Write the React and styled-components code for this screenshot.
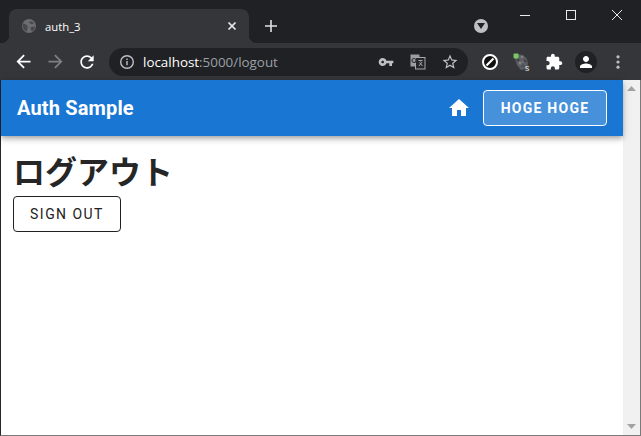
import React from "react";
import styled, { createGlobalStyle } from "styled-components";

const GlobalStyle = createGlobalStyle`
  html, body {
    margin: 0;
    padding: 0;
    overflow: hidden;
    background: #202124;
  }
`;

const Window = styled.div`
  width: 641px;
  height: 436px;
  box-sizing: border-box;
  display: flex;
  flex-direction: column;
  font-family: "Open Sans", "Liberation Sans", sans-serif;
  background: #202124;
`;

const TitleBar = styled.div`
  height: 43px;
  flex: none;
  display: flex;
  align-items: flex-start;
  padding: 0 1px 0 9px;
`;

const Tab = styled.div`
  position: relative;
  width: 240px;
  height: 34px;
  margin-top: 9px;
  box-sizing: border-box;
  padding: 0 9px 0 13px;
  display: flex;
  align-items: center;
  background: #35363a;
  border-radius: 8px 8px 0 0;

  &::before,
  &::after {
    content: "";
    position: absolute;
    bottom: 0;
    width: 8px;
    height: 8px;
  }
  &::before {
    left: -8px;
    background: radial-gradient(circle at 0 0, transparent 8px, #35363a 8.5px);
  }
  &::after {
    right: -8px;
    background: radial-gradient(circle at 100% 0, transparent 8px, #35363a 8.5px);
  }
`;

const TabTitle = styled.span`
  flex: 1;
  margin-left: 9px;
  font-size: 11.3px;
  color: #fff;
`;

const NewTab = styled.div`
  width: 28px;
  height: 28px;
  margin: 12px 0 0 8px;
  display: flex;
  align-items: center;
  justify-content: center;
`;

const TitleSpacer = styled.div`
  flex: 1;
`;

const TabSearch = styled.div`
  width: 14px;
  height: 14px;
  margin: 19px 14px 0 0;
  border-radius: 50%;
  background: #bdc1c6;
  display: flex;
  align-items: center;
  justify-content: center;
`;

const WindowControl = styled.div`
  width: 46px;
  height: 30px;
  display: flex;
  align-items: center;
  justify-content: center;
`;

const Toolbar = styled.div`
  height: 37px;
  flex: none;
  display: flex;
  align-items: center;
  padding: 0 7px;
  background: #35363a;
`;

const ToolButton = styled.div`
  width: 32px;
  height: 32px;
  flex: none;
  display: flex;
  align-items: center;
  justify-content: center;
`;

const Omnibox = styled.div`
  flex: 1;
  height: 28px;
  margin: 0 6px;
  padding: 0 2px 0 10px;
  box-sizing: border-box;
  display: flex;
  align-items: center;
  background: #202124;
  border-radius: 14px;
`;

const UrlText = styled.div`
  flex: 1;
  margin-left: 8px;
  font-size: 13.4px;
  color: #9aa0a6;
  white-space: nowrap;
`;

const UrlHost = styled.span`
  color: #fff;
`;

const OmniIcon = styled.div`
  width: 32px;
  height: 28px;
  flex: none;
  display: flex;
  align-items: center;
  justify-content: center;
`;

const Avatar = styled.div`
  width: 22px;
  height: 22px;
  border-radius: 50%;
  background: #202124;
  display: flex;
  align-items: center;
  justify-content: center;
`;

const Viewport = styled.div`
  flex: 1;
  min-height: 0;
  display: flex;
  border-left: 1px solid #26272a;
  border-right: 1px solid #7a7a7a;
  border-bottom: 1px solid #7a7a7a;
  background: #fff;
`;

const Page = styled.div`
  flex: 1;
  min-width: 0;
  display: flex;
  flex-direction: column;
  font-family: Roboto, "Noto Sans CJK JP", sans-serif;
`;

const AppBar = styled.header`
  position: relative;
  height: 56px;
  flex: none;
  display: flex;
  align-items: center;
  padding: 0 16px;
  background: #1976d2;
  color: #fff;
  box-shadow: 0 2px 4px -1px rgba(0, 0, 0, 0.2), 0 4px 5px 0 rgba(0, 0, 0, 0.14),
    0 1px 10px 0 rgba(0, 0, 0, 0.12);
`;

const AppTitle = styled.div`
  flex: 1;
  font-size: 20px;
  font-weight: 700;
  letter-spacing: 0.15px;
`;

const HomeButton = styled.div`
  width: 24px;
  height: 24px;
  margin-right: 12px;
`;

const AccountButton = styled.div`
  width: 124px;
  height: 36px;
  box-sizing: border-box;
  display: flex;
  align-items: center;
  justify-content: center;
  border: 1px solid #fff;
  border-radius: 4px;
  background: rgba(255, 255, 255, 0.2);
  font-size: 14px;
  font-weight: 700;
  letter-spacing: 1.25px;
`;

const Content = styled.main`
  padding: 10px 12px;
`;

const Heading = styled.h1`
  margin: 0 0 2px;
  font-family: "Noto Sans CJK JP", sans-serif;
  font-size: 32px;
  font-weight: 700;
  line-height: 48px;
  color: #262626;
`;

const SignOutButton = styled.button`
  width: 108px;
  height: 36px;
  display: block;
  padding: 0;
  background: #fff;
  border: 1px solid #212121;
  border-radius: 4px;
  font-family: Roboto, sans-serif;
  font-size: 14px;
  font-weight: 400;
  letter-spacing: 1.45px;
  color: #212121;
`;

const Scrollbar = styled.div`
  width: 17px;
  flex: none;
  display: flex;
  flex-direction: column;
  justify-content: space-between;
  align-items: center;
  background: #f1f1f1;
`;

const ScrollArrow = styled.div`
  height: 17px;
  display: flex;
  align-items: center;
  justify-content: center;
`;

const Icon = ({ d, size = 24, fill = "#fff" }) => (
  <svg width={size} height={size} viewBox="0 0 24 24" fill={fill}>
    <path d={d} />
  </svg>
);

const paths = {
  back: "M20 11H7.83l5.59-5.59L12 4l-8 8 8 8 1.41-1.41L7.83 13H20v-2z",
  forward: "M4 11h12.17l-5.59-5.59L12 4l8 8-8 8-1.41-1.41L16.17 13H4v-2z",
  reload:
    "M17.65 6.35C16.2 4.9 14.21 4 12 4c-4.42 0-7.99 3.58-7.99 8s3.57 8 7.99 8c3.73 0 6.84-2.55 7.73-6h-2.08c-.82 2.33-3.04 4-5.65 4-3.31 0-6-2.69-6-6s2.69-6 6-6c1.66 0 3.14.69 4.22 1.78L13 11h7V4l-2.35 2.35z",
  key: "M12.65 10C11.83 7.67 9.61 6 7 6c-3.31 0-6 2.69-6 6s2.69 6 6 6c2.61 0 4.83-1.67 5.65-4H17v4h4v-4h2v-4H12.65zM7 14c-1.1 0-2-.9-2-2s.9-2 2-2 2 .9 2 2-.9 2-2 2z",
  star: "M22 9.24l-7.19-.62L12 2 9.19 8.63 2 9.24l5.46 4.73L5.82 21 12 17.27 18.18 21l-1.63-7.03L22 9.24zM12 15.4l-3.76 2.27 1-4.28-3.32-2.88 4.38-.38L12 6.1l1.71 4.04 4.38.38-3.32 2.88 1 4.28L12 15.4z",
  puzzle:
    "M20.5 11H19V7c0-1.1-.9-2-2-2h-4V3.5C13 2.12 11.88 1 10.5 1S8 2.12 8 3.5V5H4c-1.1 0-1.99.9-1.99 2v3.8H3.5c1.49 0 2.7 1.21 2.7 2.7s-1.21 2.7-2.7 2.7H2V20c0 1.1.9 2 2 2h3.8v-1.5c0-1.49 1.21-2.7 2.7-2.7 1.49 0 2.7 1.21 2.7 2.7V22H17c1.1 0 2-.9 2-2v-4h1.5c1.38 0 2.5-1.12 2.5-2.5S21.88 11 20.5 11z",
  person:
    "M12 12c2.21 0 4-1.79 4-4s-1.79-4-4-4-4 1.79-4 4 1.79 4 4 4zm0 2c-2.67 0-8 1.34-8 4v2h16v-2c0-2.66-5.33-4-8-4z",
  home: "M10 20v-6h4v6h5v-8h3L12 3 2 12h3v8z",
};

const Globe = () => (
  <svg width="14" height="14" viewBox="0 0 14 14">
    <circle cx="7" cy="7" r="7" fill="#6b6d71" />
    <path d="M1 4.5c2 .2 3.2 1.2 4.6 2.4.6 1.4-.4 2-.4 3.6 0 1-.5 1.6-.8 2.2C2 11.5.5 9 .7 6zM7 2.5c2 0 3 .5 4.5.8.5 1 .2 1.6-.8 1.8C9 5.4 7.5 4.5 7 2.5zM8.5 8.5c1.5-.8 3-.8 4.5-1 0 2-1 3.8-2.7 5-1.2-1-1.8-2.5-1.8-4z" fill="#47494d" />
  </svg>
);

const InfoIcon = () => (
  <svg width="16" height="16" viewBox="0 0 16 16" fill="none">
    <circle cx="8" cy="8" r="6.3" stroke="#bdc1c6" strokeWidth="1.4" />
    <rect x="7.3" y="7" width="1.4" height="4.2" fill="#bdc1c6" />
    <rect x="7.3" y="4.6" width="1.4" height="1.4" fill="#bdc1c6" />
  </svg>
);

const TranslateIcon = () => (
  <svg width="16" height="16" viewBox="0 0 16 16">
    <rect x="0.5" y="0.5" width="9" height="12" fill="#9a9da1" />
    <rect x="5.5" y="3.5" width="9.5" height="11.5" fill="#26272a" stroke="#a4a7ab" />
    <circle cx="4" cy="6.5" r="2" fill="none" stroke="#35363a" strokeWidth="1.2" />
    <path d="M8.5 6.5h4M10.5 6v1.5M9 12l3-4M9.5 8.5l3 3.5" stroke="#a4a7ab" fill="none" />
  </svg>
);

const BlockIcon = () => (
  <svg width="18" height="18" viewBox="0 0 18 18" fill="none">
    <circle cx="9" cy="9" r="7" fill="#111" stroke="#fff" strokeWidth="2" />
    <path d="M5.5 12.5l7-7" stroke="#fff" strokeWidth="2.2" />
  </svg>
);

const NoisyExtension = () => (
  <svg width="18" height="18" viewBox="0 0 18 18">
    <path d="M3 1l7 1 4 4 1 5-2 5-5 1-4-5-2-6z" fill="#5c5e61" />
    <circle cx="5" cy="7" r="1.5" fill="#3f4144" />
    <circle cx="9" cy="4" r="1.3" fill="#808285" />
    <circle cx="12" cy="8" r="1.5" fill="#43454a" />
    <circle cx="7" cy="10" r="1.4" fill="#808285" />
    <circle cx="10" cy="13" r="1.5" fill="#4b4d50" />
    <circle cx="10" cy="9" r="1" fill="#77797c" />
    <rect x="0.5" y="0.5" width="5" height="5" rx="1" fill="#78c76a" />
    <text x="12" y="17.5" fontSize="8.5" fill="#e8e8e8" fontFamily="Liberation Sans, sans-serif">s</text>
  </svg>
);

const MenuDots = () => (
  <svg width="16" height="16" viewBox="0 0 16 16" fill="#bdc1c6">
    <circle cx="8" cy="2.8" r="1.6" />
    <circle cx="8" cy="8" r="1.6" />
    <circle cx="8" cy="13.2" r="1.6" />
  </svg>
);

function App() {
  return (
    <Window>
      <GlobalStyle />
      <TitleBar>
        <Tab>
          <Globe />
          <TabTitle>auth_3</TabTitle>
          <svg width="16" height="16" viewBox="0 0 16 16" stroke="#e8eaed" strokeWidth="1.7">
            <path d="M4.5 4.5l7 7M11.5 4.5l-7 7" />
          </svg>
        </Tab>
        <NewTab>
          <svg width="14" height="14" viewBox="0 0 14 14" stroke="#dee1e6" strokeWidth="1.6">
            <path d="M7 1v12M1 7h12" />
          </svg>
        </NewTab>
        <TitleSpacer />
        <TabSearch>
          <svg width="8" height="6" viewBox="0 0 8 6" fill="#202124">
            <path d="M0 0h8L4 6z" />
          </svg>
        </TabSearch>
        <WindowControl>
          <svg width="10" height="10" viewBox="0 0 10 10" stroke="#e8eaed">
            <path d="M0 5.5h10" />
          </svg>
        </WindowControl>
        <WindowControl>
          <svg width="10" height="10" viewBox="0 0 10 10" fill="none" stroke="#e8eaed">
            <rect x="0.5" y="0.5" width="9" height="9" />
          </svg>
        </WindowControl>
        <WindowControl>
          <svg width="10" height="10" viewBox="0 0 10 10" stroke="#e8eaed">
            <path d="M0 0l10 10M10 0L0 10" />
          </svg>
        </WindowControl>
      </TitleBar>

      <Toolbar>
        <ToolButton>
          <Icon d={paths.back} size={21} />
        </ToolButton>
        <ToolButton>
          <Icon d={paths.forward} size={21} fill="#7d7f83" />
        </ToolButton>
        <ToolButton>
          <Icon d={paths.reload} size={20} />
        </ToolButton>
        <Omnibox>
          <InfoIcon />
          <UrlText>
            <UrlHost>localhost</UrlHost>:5000/logout
          </UrlText>
          <OmniIcon>
            <Icon d={paths.key} size={16} fill="#bdc1c6" />
          </OmniIcon>
          <OmniIcon>
            <TranslateIcon />
          </OmniIcon>
          <OmniIcon>
            <Icon d={paths.star} size={18} fill="#bdc1c6" />
          </OmniIcon>
        </Omnibox>
        <ToolButton>
          <BlockIcon />
        </ToolButton>
        <ToolButton>
          <NoisyExtension />
        </ToolButton>
        <ToolButton>
          <Icon d={paths.puzzle} size={18} />
        </ToolButton>
        <ToolButton>
          <Avatar>
            <Icon d={paths.person} size={18} />
          </Avatar>
        </ToolButton>
        <ToolButton>
          <MenuDots />
        </ToolButton>
      </Toolbar>

      <Viewport>
        <Page>
          <AppBar>
            <AppTitle>Auth Sample</AppTitle>
            <HomeButton>
              <Icon d={paths.home} />
            </HomeButton>
            <AccountButton>HOGE HOGE</AccountButton>
          </AppBar>
          <Content>
            <Heading>ログアウト</Heading>
            <SignOutButton>SIGN OUT</SignOutButton>
          </Content>
        </Page>
        <Scrollbar>
          <ScrollArrow>
            <svg width="9" height="5" viewBox="0 0 9 5" fill="#a3a3a3">
              <path d="M4.5 0L9 5H0z" />
            </svg>
          </ScrollArrow>
          <ScrollArrow>
            <svg width="9" height="5" viewBox="0 0 9 5" fill="#a3a3a3">
              <path d="M0 0h9L4.5 5z" />
            </svg>
          </ScrollArrow>
        </Scrollbar>
      </Viewport>
    </Window>
  );
}

export default App;
